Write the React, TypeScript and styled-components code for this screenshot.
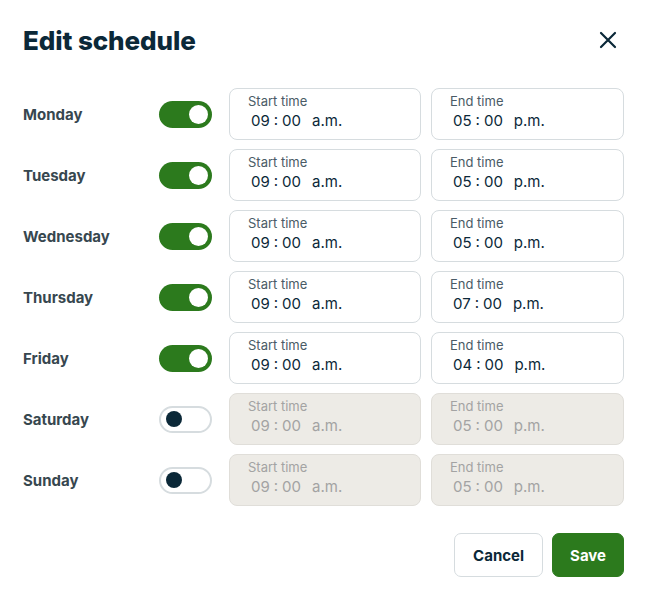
import styled, { createGlobalStyle } from "styled-components";

type Day = {
  name: string;
  on: boolean;
  start: [string, string, string];
  end: [string, string, string];
};

const days: Day[] = [
  { name: "Monday", on: true, start: ["09", "00", "a.m."], end: ["05", "00", "p.m."] },
  { name: "Tuesday", on: true, start: ["09", "00", "a.m."], end: ["05", "00", "p.m."] },
  { name: "Wednesday", on: true, start: ["09", "00", "a.m."], end: ["05", "00", "p.m."] },
  { name: "Thursday", on: true, start: ["09", "00", "a.m."], end: ["07", "00", "p.m."] },
  { name: "Friday", on: true, start: ["09", "00", "a.m."], end: ["04", "00", "p.m."] },
  { name: "Saturday", on: false, start: ["09", "00", "a.m."], end: ["05", "00", "p.m."] },
  { name: "Sunday", on: false, start: ["09", "00", "a.m."], end: ["05", "00", "p.m."] },
];

const GlobalStyle = createGlobalStyle`
  body {
    margin: 0;
    background: #fff;
    font-family: Inter, "Noto Sans", sans-serif;
  }
`;

const Dialog = styled.div`
  width: 648px;
  box-sizing: border-box;
  padding: 26px 24px 0 23px;
`;

const Header = styled.div`
  display: flex;
  align-items: center;
  justify-content: space-between;
  height: 28px;
  margin-bottom: 34px;
`;

const Title = styled.h1`
  margin: 0;
  font-size: 26px;
  font-weight: 800;
  color: #0b2838;
  letter-spacing: -0.1px;
`;

const CloseButton = styled.button`
  border: none;
  background: none;
  padding: 0;
  margin-right: 6px;
  width: 20px;
  height: 20px;
  display: flex;
  align-items: center;
  justify-content: center;
  cursor: pointer;
`;

const Rows = styled.div`
  display: flex;
  flex-direction: column;
  gap: 9px;
`;

const Row = styled.div`
  display: grid;
  grid-template-columns: 136px 70px 1fr;
  align-items: center;
  height: 52px;
`;

const DayName = styled.div`
  font-size: 15px;
  font-weight: 700;
  color: #37474f;
`;

const Toggle = styled.div<{ $on: boolean }>`
  width: 53px;
  height: 27px;
  box-sizing: border-box;
  border-radius: 14px;
  display: flex;
  align-items: center;
  justify-content: ${(p) => (p.$on ? "flex-end" : "flex-start")};
  padding: ${(p) => (p.$on ? "0 4px" : "0 5px")};
  background: ${(p) => (p.$on ? "#2c7a1d" : "#fff")};
  border: ${(p) => (p.$on ? "none" : "2px solid #d6dcdf")};
`;

const Knob = styled.div<{ $on: boolean }>`
  width: ${(p) => (p.$on ? "19px" : "16px")};
  height: ${(p) => (p.$on ? "19px" : "16px")};
  border-radius: 50%;
  background: ${(p) => (p.$on ? "#fff" : "#0b2838")};
`;

const TimePair = styled.div`
  display: grid;
  grid-template-columns: 192px 193px;
  column-gap: 10px;
`;

const TimeBox = styled.div<{ $disabled: boolean }>`
  height: 52px;
  box-sizing: border-box;
  border: 1px solid ${(p) => (p.$disabled ? "#e0ded9" : "#d6dcdf")};
  background: ${(p) => (p.$disabled ? "#edebe6" : "#fff")};
  border-radius: 8px;
  padding: 4px 0 0 18px;
  display: flex;
  flex-direction: column;
`;

const TimeLabel = styled.div<{ $disabled: boolean }>`
  font-size: 13px;
  line-height: 16px;
  color: ${(p) => (p.$disabled ? "#a3a3a3" : "#4a5b66")};
`;

const TimeValue = styled.div<{ $disabled: boolean }>`
  display: flex;
  align-items: center;
  font-size: 15px;
  line-height: 20px;
  margin-top: 2px;
  padding-left: 3px;
  color: ${(p) => (p.$disabled ? "#a3a3a3" : "#0b2838")};
`;

const Colon = styled.span`
  margin: 0 4px;
  position: relative;
  top: -1px;
`;

const Meridiem = styled.span`
  margin-left: 11px;
`;

const Footer = styled.div`
  display: flex;
  justify-content: flex-end;
  gap: 9px;
  margin-top: 27px;
`;

const Button = styled.button<{ $primary?: boolean }>`
  height: 44px;
  box-sizing: border-box;
  border-radius: 7px;
  font-family: Inter, "Noto Sans", sans-serif;
  font-size: 15px;
  font-weight: 700;
  cursor: pointer;
  padding: 0 ${(p) => (p.$primary ? "17px" : "18px")};
  border: 1px solid ${(p) => (p.$primary ? "#2c7a1d" : "#d6dcdf")};
  background: ${(p) => (p.$primary ? "#2c7a1d" : "#fff")};
  color: ${(p) => (p.$primary ? "#fff" : "#0b2838")};
`;

function Time({ value, disabled }: { value: [string, string, string]; disabled: boolean }) {
  return (
    <TimeValue $disabled={disabled}>
      <span>{value[0]}</span>
      <Colon>:</Colon>
      <span>{value[1]}</span>
      <Meridiem>{value[2]}</Meridiem>
    </TimeValue>
  );
}

export default function App() {
  return (
    <>
      <GlobalStyle />
      <Dialog>
        <Header>
          <Title>Edit schedule</Title>
          <CloseButton aria-label="Close">
            <svg width="18" height="18" viewBox="0 0 18 18" fill="none">
              <path d="M2 2L16 16M16 2L2 16" stroke="#0b2838" strokeWidth="2.2" strokeLinecap="round" />
            </svg>
          </CloseButton>
        </Header>
        <Rows>
          {days.map((d) => (
            <Row key={d.name}>
              <DayName>{d.name}</DayName>
              <Toggle $on={d.on}>
                <Knob $on={d.on} />
              </Toggle>
              <TimePair>
                <TimeBox $disabled={!d.on}>
                  <TimeLabel $disabled={!d.on}>Start time</TimeLabel>
                  <Time value={d.start} disabled={!d.on} />
                </TimeBox>
                <TimeBox $disabled={!d.on}>
                  <TimeLabel $disabled={!d.on}>End time</TimeLabel>
                  <Time value={d.end} disabled={!d.on} />
                </TimeBox>
              </TimePair>
            </Row>
          ))}
        </Rows>
        <Footer>
          <Button>Cancel</Button>
          <Button $primary>Save</Button>
        </Footer>
      </Dialog>
    </>
  );
}
